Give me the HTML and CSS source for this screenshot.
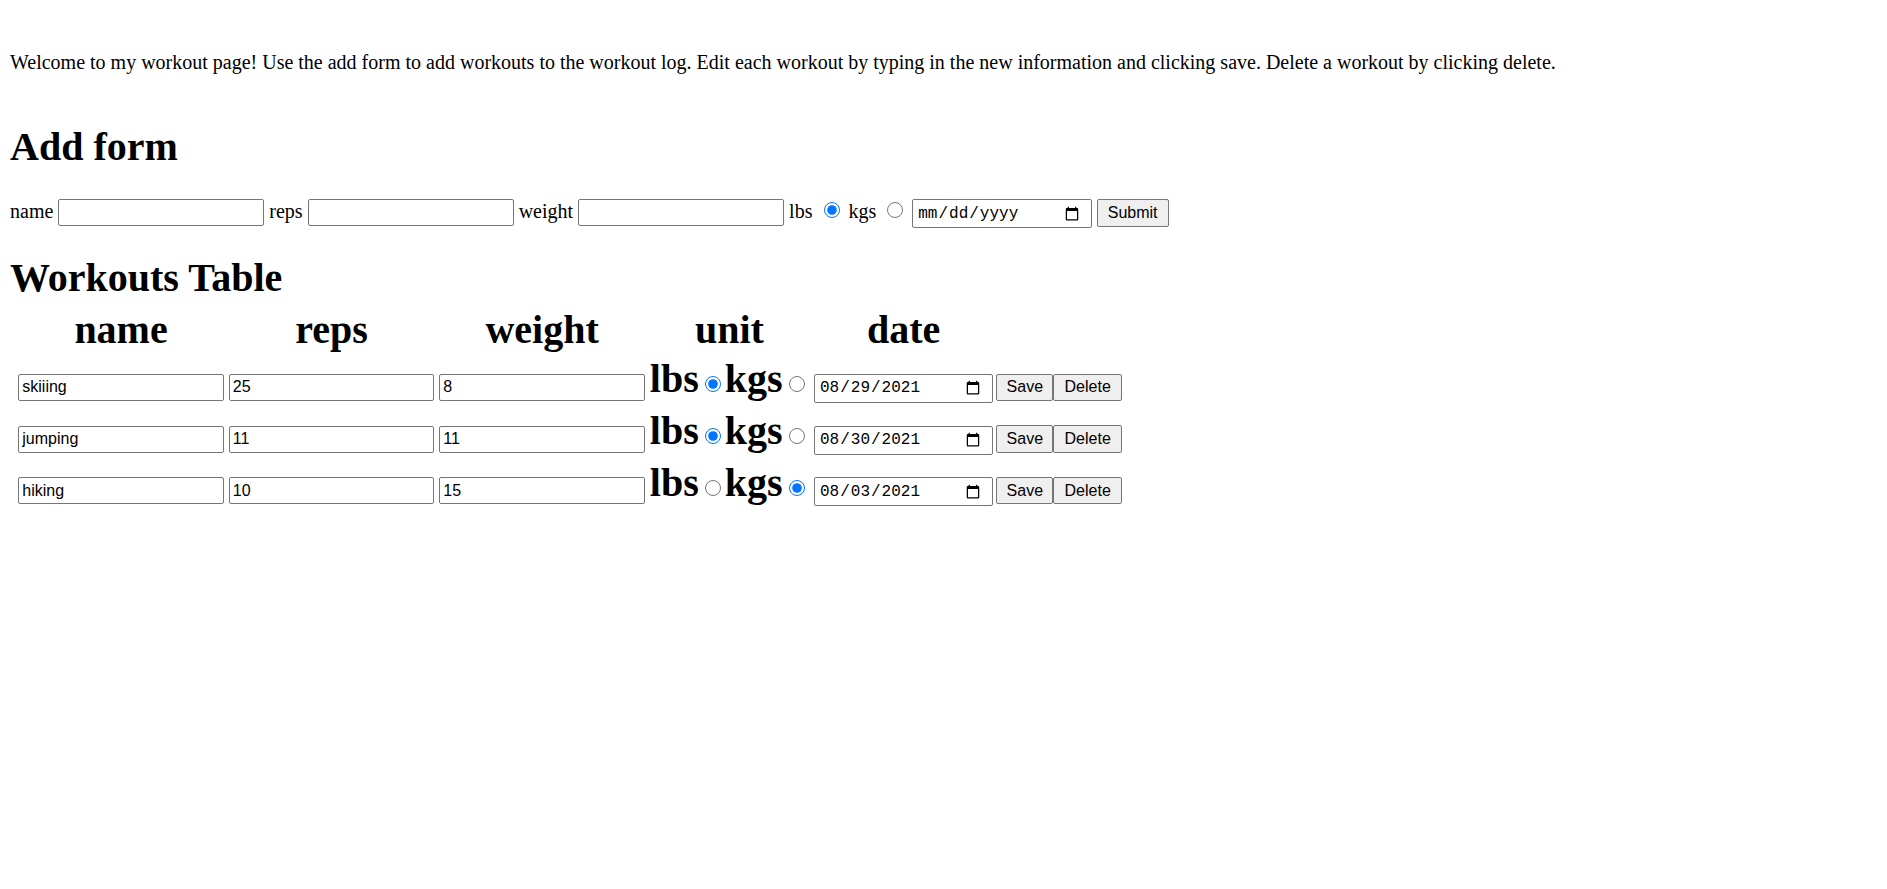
FILE: index.html
```html
<!DOCTYPE html>
<html lang="en">
<head>
<meta charset="utf-8">
<title>Workouts</title>
<link rel="stylesheet" href="styles.css">
</head>
<body class="page">
<p class="intro">Welcome to my workout page! Use the add form to add workouts to the workout log. Edit each workout by typing in the new information and clicking save. Delete a workout by clicking delete.</p>
<h1 class="title title-add">Add form</h1>
<form class="add-form">name <input class="text-in form-in" type="text"> reps <input class="text-in form-in" type="text"> weight <input class="text-in form-in" type="text"> lbs <input class="radio-in" type="radio" name="unit" checked> kgs <input class="radio-in" type="radio" name="unit"> <input class="date-in" type="date"> <button class="btn btn-submit" type="button">Submit</button></form>
<h1 class="title title-table">Workouts Table</h1>
<div class="table">
  <div class="row head">
    <div class="cell c-name">name</div>
    <div class="cell c-reps">reps</div>
    <div class="cell c-weight">weight</div>
    <div class="cell c-unit">unit</div>
    <div class="cell c-date">date</div>
  </div>
  <div class="row data">
    <div class="cell c-name"><input class="text-in cell-in" type="text" value="skiiing"></div>
    <div class="cell c-reps"><input class="text-in cell-in" type="text" value="25"></div>
    <div class="cell c-weight"><input class="text-in cell-in" type="text" value="8"></div>
    <div class="cell c-unit"><span>lbs</span><input class="radio-cell" type="radio" name="u1" checked><span>kgs</span><input class="radio-cell" type="radio" name="u1"></div>
    <div class="cell c-date"><input class="date-in cell-date" type="date" value="2021-08-29"></div>
    <div class="cell c-btns"><button class="btn btn-save" type="button">Save</button><button class="btn btn-delete" type="button">Delete</button></div>
  </div>
  <div class="row data">
    <div class="cell c-name"><input class="text-in cell-in" type="text" value="jumping"></div>
    <div class="cell c-reps"><input class="text-in cell-in" type="text" value="11"></div>
    <div class="cell c-weight"><input class="text-in cell-in" type="text" value="11"></div>
    <div class="cell c-unit"><span>lbs</span><input class="radio-cell" type="radio" name="u2" checked><span>kgs</span><input class="radio-cell" type="radio" name="u2"></div>
    <div class="cell c-date"><input class="date-in cell-date" type="date" value="2021-08-30"></div>
    <div class="cell c-btns"><button class="btn btn-save" type="button">Save</button><button class="btn btn-delete" type="button">Delete</button></div>
  </div>
  <div class="row data">
    <div class="cell c-name"><input class="text-in cell-in" type="text" value="hiking"></div>
    <div class="cell c-reps"><input class="text-in cell-in" type="text" value="10"></div>
    <div class="cell c-weight"><input class="text-in cell-in" type="text" value="15"></div>
    <div class="cell c-unit"><span>lbs</span><input class="radio-cell" type="radio" name="u3"><span>kgs</span><input class="radio-cell" type="radio" name="u3" checked></div>
    <div class="cell c-date"><input class="date-in cell-date" type="date" value="2021-08-03"></div>
    <div class="cell c-btns"><button class="btn btn-save" type="button">Save</button><button class="btn btn-delete" type="button">Delete</button></div>
  </div>
</div>
</body>
</html>
```
FILE: styles.css
```css
html, body {
  background: #fff;
}
.page {
  margin: 0;
  padding: 0 0 0 10px;
  font-family: "Liberation Serif", "Times New Roman", serif;
  font-size: 20px;
  color: #000;
}
.intro {
  margin: 50.75px 0 0;
  line-height: 23px;
}
.title {
  margin: 0;
  font-size: 40px;
  font-weight: bold;
  line-height: 46px;
}
.title-add {
  margin-top: 50.45px;
}
.add-form {
  margin: 29px 0 0;
  line-height: 23px;
  white-space: nowrap;
}
.text-in {
  box-sizing: border-box;
  width: 205.5px;
  height: 27px;
  margin: 0;
  padding: 0 3px;
  border: 1px solid #767676;
  border-radius: 2px;
  background: #fff;
  font-family: "Liberation Sans", Arial, sans-serif;
  font-size: 16px;
  color: #000;
  outline: none;
}
.form-in {
  width: 206px;
}
.radio-in {
  width: 16px;
  height: 16px;
  margin: 0 3.75px 0 6.25px;
}
.date-in {
  box-sizing: border-box;
  width: 179.3px;
  height: 29px;
  margin: 0;
  padding: 0 4px;
  border: 1px solid #767676;
  border-radius: 2px;
  background: #fff;
  font-family: "Liberation Mono", "Courier New", monospace;
  font-size: 16px;
  color: #000;
}
.date-in::-webkit-calendar-picker-indicator {
  margin-right: 5px;
}
.btn {
  box-sizing: border-box;
  height: 27.4px;
  margin: 0;
  padding: 0;
  border: 1px solid #767676;
  border-radius: 2px;
  background: #efefef;
  font-family: "Liberation Sans", Arial, sans-serif;
  font-size: 16px;
  color: #000;
}
.btn-submit {
  width: 72.3px;
}
.title-table {
  margin-top: 26.5px;
}
.table {
  margin: 6px 0 0 8.3px;
}
.row {
  display: flex;
  align-items: baseline;
  gap: 5px;
  height: 46px;
  font-size: 40px;
  font-weight: bold;
  line-height: 46px;
}
.row.data {
  margin-top: 5.65px;
}
.row.head + .row.data {
  margin-top: 3.6px;
}
.cell {
  flex: none;
  text-align: center;
  white-space: nowrap;
}
.c-name, .c-reps, .c-weight {
  width: 205.5px;
}
.c-unit {
  width: 159.2px;
  text-align: left;
}
.head .c-unit {
  text-align: center;
}
.c-date {
  width: 179.2px;
}
.cell-date {
  width: 179.2px;
}
.c-btns {
  margin-left: -2px;
  text-align: left;
}
.radio-cell {
  width: 16px;
  height: 16px;
  margin: 0 3.75px 0 6.25px;
}
.btn-save {
  width: 57.3px;
}
.btn-delete {
  width: 68.4px;
}
```
